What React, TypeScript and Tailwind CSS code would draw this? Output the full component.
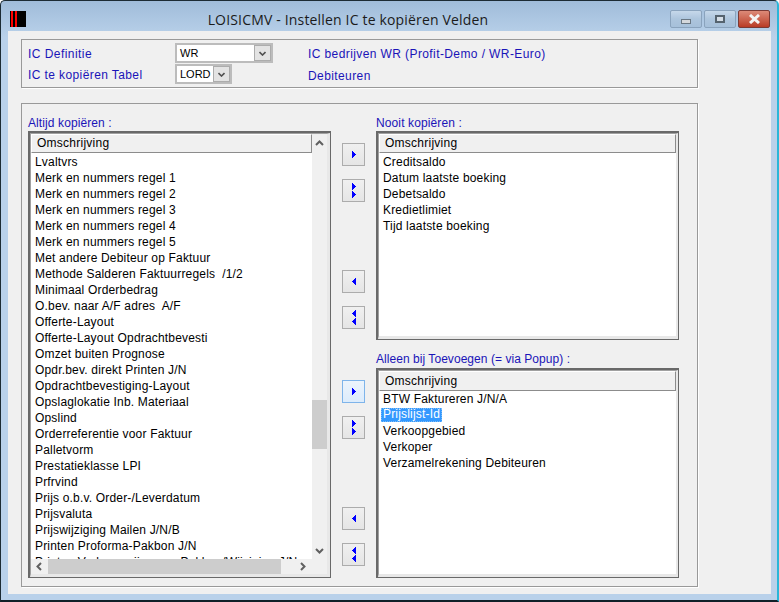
const left = ["Lvaltvrs","Merk en nummers regel 1","Merk en nummers regel 2","Merk en nummers regel 3","Merk en nummers regel 4","Merk en nummers regel 5","Met andere Debiteur op Faktuur","Methode Salderen Faktuurregels  /1/2","Minimaal Orderbedrag","O.bev. naar A/F adres  A/F","Offerte-Layout","Offerte-Layout Opdrachtbevesti","Omzet buiten Prognose","Opdr.bev. direkt Printen J/N","Opdrachtbevestiging-Layout","Opslaglokatie Inb. Materiaal","Opslind","Orderreferentie voor Faktuur","Palletvorm","Prestatieklasse LPI","Prfrvind","Prijs o.b.v. Order-/Leverdatum","Prijsvaluta","Prijswijziging Mailen J/N/B","Printen Proforma-Pakbon J/N","Printen Verkoopprijzen op Pakbon/Wijziging J/N"];
const never = ["Creditsaldo","Datum laatste boeking","Debetsaldo","Kredietlimiet","Tijd laatste boeking"];
const add = ["BTW Faktureren J/N/A","Prijslijst-Id","Verkoopgebied","Verkoper","Verzamelrekening Debiteuren"];

function Tri({ dir, y }: { dir: "r" | "l"; y: number }) {
  const widths = [1, 2, 3, 4, 3, 2, 1];
  return (
    <>
      {widths.map((w, i) => (
        <rect key={i} x={dir === "r" ? 0 : 4 - w} y={y + i} width={w} height={1} fill="#0000ff" />
      ))}
    </>
  );
}
function ArrowBtn({ dir, dbl, hot, cls }: { dir: "r" | "l"; dbl?: boolean; hot?: boolean; cls?: string }) {
  return (
    <div className={`w-[23px] h-[23px] flex items-center justify-center border ${hot ? "border-[#7eb4ea] bg-gradient-to-b from-[#ecf4fc] to-[#dcecfc]" : "border-[#acacac] bg-gradient-to-b from-[#f0f0f0] to-[#e5e5e5]"} ${cls ?? ""}`}>
      <svg width="4" height={dbl ? 15 : 7} viewBox={`0 0 4 ${dbl ? 15 : 7}`} shapeRendering="crispEdges">
        <Tri dir={dir} y={0} />
        {dbl && <Tri dir={dir} y={8} />}
      </svg>
    </div>
  );
}
function Chev({ d }: { d: "u" | "d" | "l" | "r" }) {
  const p = { u: "M1 6 L4.5 2.5 L8 6", d: "M1 3 L4.5 6.5 L8 3", l: "M6 1 L2.5 4.5 L6 8", r: "M3 1 L6.5 4.5 L3 8" }[d];
  return <svg width="9" height="9" viewBox="0 0 9 9"><path d={p} fill="none" stroke="#606060" strokeWidth="2" /></svg>;
}
function ListBox({ rows, sel, scroll, h, tall }: { rows: string[]; sel?: number; scroll?: boolean; h: string; tall?: boolean }) {
  return (
    <div className={`${h} w-[303px] border-l-2 border-t-2 border-r border-b border-[#696969] bg-white flex flex-col`}>
      <div className={`flex-1 min-h-0 flex border-l border-t border-b-[3px] border-[#e8e8e8] border-l-[#a0a0a0] border-t-[#a0a0a0] ${scroll ? "border-r-[3px]" : "border-r-[2px]"}`}>
        <div className="flex-1 min-w-0 flex flex-col">
          <div className={`${tall ? "h-[20px] leading-[18px]" : "h-[19px] leading-[17px]"} shrink-0 bg-[#f0f0f0] border-t border-l border-white border-b border-r border-b-[#8c8c8c] border-r-[#8c8c8c] pl-[5px] text-black tracking-[0.25px]`}>Omschrijving</div>
          <div className={`flex-1 min-h-0 overflow-hidden ${tall ? "" : "pt-px"}`}>
            {rows.map((r, i) => (
              <div key={r} className="h-4 leading-4 pl-1 whitespace-pre text-black tracking-[0.18px]">
                <span className={i === sel ? "inline-block h-[14px] leading-[13px] mt-px bg-[#3399ff] text-white pl-[2px] pr-[2px] -ml-[2px] align-top outline-1 outline-dotted outline-[#7fbcf5] -outline-offset-1" : ""}>{r}</span>
              </div>
            ))}
          </div>
          {scroll && (
            <div className="h-[15px] shrink-0 bg-[#f0f0f0] flex items-center">
              <div className="w-[17px] flex justify-center"><Chev d="l" /></div>
              <div className="w-[233px] h-full bg-[#cdcdcd]" />
              <div className="flex-1 flex justify-center pl-[12px]"><Chev d="r" /></div>
            </div>
          )}
        </div>
        {scroll && (
          <div className="w-[15px] bg-[#f0f0f0] flex flex-col items-center">
            <div className="h-[18px] flex items-center"><Chev d="u" /></div>
            <div className="h-[248px] shrink-0" />
            <div className="h-[49px] w-full bg-[#cdcdcd] shrink-0" />
            <div className="h-[93px] shrink-0" />
            <div className="h-[16px] flex items-center"><Chev d="d" /></div>
            <div className="flex-1" />
          </div>
        )}
      </div>
    </div>
  );
}
function Combo({ text, w }: { text: string; w: string }) {
  return (
    <div className={`${w} h-5 border-2 border-[#bcbcbc] bg-white flex items-center justify-between pr-[0px] text-black`}>
      <span className="pl-[3px] text-[11px]">{text}</span>
      <span className="w-[17px] h-4 bg-[#e3e3e3] border border-[#acacac] flex items-center justify-center">
        <svg width="7" height="5" viewBox="0 0 7 5"><path d="M0.5 1 L3.5 4 L6.5 1" fill="none" stroke="#505050" strokeWidth="1.6" /></svg>
      </span>
    </div>
  );
}
function WinBtn({ cls, w, children }: { cls: string; w: string; children: React.ReactNode }) {
  return <div className={`${w} h-[18px] rounded-[2px] border flex items-center justify-center ${cls}`}>{children}</div>;
}
const blue = "text-[#1a14b8]";
const panel = "border border-[#999999] shadow-[1px_1px_0_#ffffff]";
const glass = "border-[#8aa3bd] bg-gradient-to-b from-[#c6d8ea] via-[#adc5dd] to-[#a6c0da]";

export default function App() {
  return (
    <div className="w-[779px] h-[602px] overflow-hidden rounded-t-[5px] bg-[#b9d1ea] bg-gradient-to-b from-[#a0bcd9] from-0% to-[#b9d1ea] to-[6%] border border-[#1c2b33] border-b-2 border-r-2 border-b-[#102028] border-r-[#29b6d8] flex flex-col text-[12px]" style={{ fontFamily: "Liberation Sans, Arial, sans-serif" }}>
      <div className="h-[30px] shrink-0 flex items-start pl-[9px] pr-[7px]">
        <div className="mt-[10px] w-4 h-4 bg-black flex shrink-0">
          <div className="w-px" /><div className="w-[2px] bg-[#ff0000]" /><div className="w-[2px]" /><div className="w-[2px] bg-[#ff0000]" />
        </div>
        <div className="flex-1 text-center mt-[9px] text-[14px] leading-5 text-[#1b1b1b] tracking-[0.17px]" style={{ fontFamily: "Open Sans, sans-serif" }}>LOISICMV - Instellen IC te kopiëren Velden</div>
        <div className="flex gap-[2px] mt-[9px] shrink-0">
          <WinBtn w="w-[32px]" cls={glass}><div className="w-[10px] h-[5px] mt-1 bg-[#d4d8dc] border border-[#6a7884]" /></WinBtn>
          <WinBtn w="w-[32px]" cls={glass}><div className="w-[10px] h-[8px] bg-[#d4dde6] border-2 border-[#55636f]" /></WinBtn>
          <WinBtn w="w-[32px]" cls="bg-gradient-to-b from-[#dc8a78] to-[#b93a25] border-[#7a3a35]">
            <svg width="13" height="10" viewBox="0 0 13 10"><path d="M2 1 L11 9 M11 1 L2 9" stroke="#f4f4f4" strokeWidth="3" /></svg>
          </WinBtn>
        </div>
      </div>
      <div className="w-[763px] h-[563px] ml-[7px] bg-[#f0f0f0] pt-2 pl-[13px]">
        <div className={`${panel} w-[677px] h-[49px] flex flex-col pt-[3px] pl-[6px] gap-[1px] ${blue}`}>
          <div className="h-5 flex items-center">
            <span className="w-[147px] tracking-[0.45px] mt-[2px]">IC Definitie</span>
            <Combo text="WR" w="w-[98px]" />
            <span className="ml-[35px] tracking-[0.4px] mt-[2px]">IC bedrijven WR (Profit-Demo / WR-Euro)</span>
          </div>
          <div className="h-5 flex items-center">
            <span className="w-[147px] tracking-[0.4px] mt-[2px]">IC te kopiëren Tabel</span>
            <Combo text="LORD" w="w-[57px]" />
            <span className="ml-[76px] tracking-[0.4px] mt-[4px]">Debiteuren</span>
          </div>
        </div>
        <div className={`${panel} w-[677px] h-[484px] mt-[15px] pl-[6px] pt-[12px] flex ${blue}`}>
          <div className="w-[303px]">
            <div className="h-[15px] leading-[14px] tracking-[0.1px]">Altijd kopiëren :</div>
            <ListBox rows={left} scroll h="h-[447px]" />
          </div>
          <div className="w-[23px] ml-[11px] pt-[27px] flex flex-col">
            <ArrowBtn dir="r" />
            <ArrowBtn dir="r" dbl cls="mt-[13px]" />
            <ArrowBtn dir="l" cls="mt-[68px]" />
            <ArrowBtn dir="l" dbl cls="mt-[13px]" />
            <ArrowBtn dir="r" hot cls="mt-[51px]" />
            <ArrowBtn dir="r" dbl cls="mt-[13px]" />
            <ArrowBtn dir="l" cls="mt-[68px]" />
            <ArrowBtn dir="l" dbl cls="mt-[13px]" />
          </div>
          <div className="w-[303px] ml-[11px]">
            <div className="h-[15px] leading-[14px] tracking-[0.12px]">Nooit kopiëren :</div>
            <ListBox rows={never} h="h-[209px]" />
            <div className="h-[16px] leading-[14px] mt-[12px] tracking-[0.05px]">Alleen bij Toevoegen (= via Popup) :</div>
            <ListBox rows={add} sel={1} tall h="h-[210px]" />
          </div>
        </div>
      </div>
    </div>
  );
}
